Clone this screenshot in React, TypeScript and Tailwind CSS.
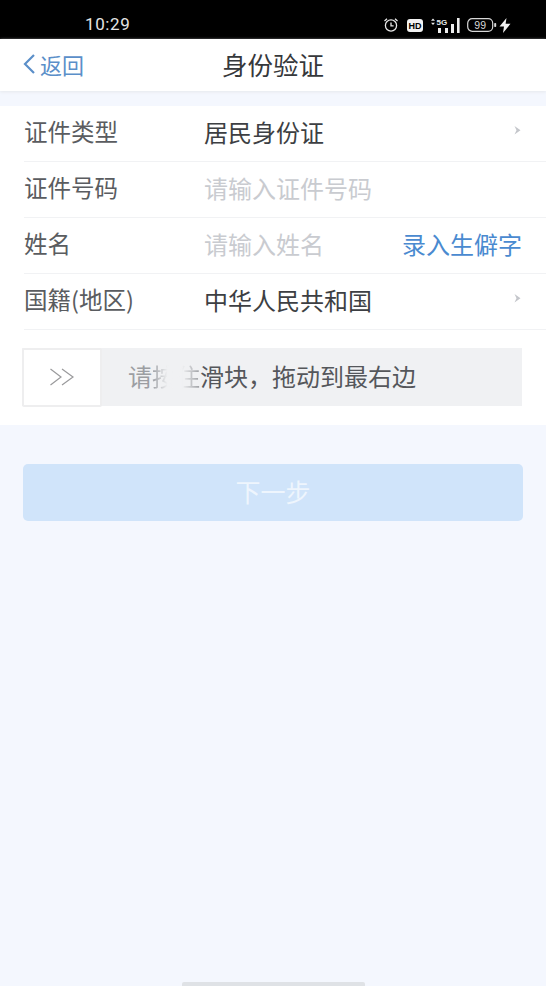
import React from 'react';

const cjk = { fontFamily: '"Noto Sans CJK SC", "Liberation Sans", sans-serif' };

const Chevron: React.FC = () => (
  <svg width="9" height="11" viewBox="0 0 9 11" className="mb-1">
    <path d="M1.5 1 L7.5 5.2 L1.5 9.5 L3.5 5.2 Z" fill="#c4c6cb" />
  </svg>
);

const StatusIcons: React.FC = () => (
  <div className="flex items-center">
    <svg width="16" height="16" viewBox="0 0 16 16" fill="none" stroke="#e8e8e8" strokeWidth="1.3">
      <circle cx="8" cy="8.5" r="5.6" />
      <path d="M8 5.6V8.9H10.6" />
      <path d="M1.5 4 L4 1.8 M14.5 4 L12 1.8" />
    </svg>
    <svg width="16" height="13" viewBox="0 0 16 13" className="ml-[8px]">
      <rect x="0" y="0" width="16" height="13" rx="3" fill="#f2f2f2" />
      <text x="8" y="10" textAnchor="middle" fontSize="9" fontWeight="700" fill="#000" fontFamily="Liberation Sans">HD</text>
    </svg>
    <svg width="30" height="17" viewBox="0 0 30 17" className="ml-[7px]">
      <path d="M3 1.5 L5 3.7 H1 Z M3 8 L5 5.8 H1 Z" fill="#e8e8e8" />
      <text x="6.5" y="7.5" fontSize="8" fontWeight="700" fill="#e8e8e8" fontFamily="Liberation Sans">5G</text>
      <rect x="8" y="11" width="3" height="5" fill="#eee" />
      <rect x="15" y="11" width="3" height="5" fill="#eee" />
      <rect x="21" y="7" width="3" height="9" fill="#eee" />
      <rect x="27" y="1" width="2.6" height="15" fill="#eee" />
    </svg>
    <svg width="30" height="14" viewBox="0 0 30 14" className="ml-[7px]">
      <rect x="0.7" y="0.7" width="25" height="12.6" rx="4.5" fill="none" stroke="#d8d8d8" strokeWidth="1.2" />
      <rect x="27.2" y="5" width="2" height="4" rx="0.8" fill="#d8d8d8" />
      <text x="13.2" y="10.6" textAnchor="middle" fontSize="10.5" fill="#d8d8d8" fontFamily="Liberation Sans">99</text>
    </svg>
    <svg width="12" height="15" viewBox="0 0 12 15" className="ml-[2px]">
      <path d="M7.5 0 L0.5 8.5 H5 L4 15 L11.5 5.8 H6.6 Z" fill="#f2f2f2" />
    </svg>
  </div>
);

const Row: React.FC<{ label: string; children: React.ReactNode }> = ({ label, children }) => (
  <div className="flex items-center h-[56px] border-b border-[#f1f2f4] pb-[3px]">
    <div className="w-[180px] text-[23.5px] text-[#5a5c60] leading-none">{label}</div>
    <div className="flex-1 flex items-center justify-between pr-[24px] leading-none">{children}</div>
  </div>
);

const App: React.FC = () => {
  return (
    <div className="w-[546px] h-[986px] relative overflow-hidden bg-[#f4f7fe]" style={cjk}>
      <div className="h-[39px] bg-black flex items-center justify-between pl-[85px] pr-[35px] pt-[11px]">
        <span className="text-[17px] text-[#e4e4e4] tracking-[0.6px]" style={{ fontFamily: 'Roboto, sans-serif' }}>
          10:29
        </span>
        <StatusIcons />
      </div>

      <div className="h-[52px] bg-white flex items-center relative shadow-[0_1px_3px_#e6e8ec]">
        <div className="flex items-center pl-[22px] text-[#5b8fc9] pb-[2px]">
          <svg width="14" height="22" viewBox="0 0 14 22" fill="none" stroke="#5b8fc9" strokeWidth="2.2">
            <path d="M12 2 L3 11 L12 20" />
          </svg>
          <span className="text-[22px] ml-[4px] leading-none">返回</span>
        </div>
        <div className="absolute inset-0 flex items-center justify-center text-[25.5px] text-[#36383b] pb-[3px] leading-none">
          身份验证
        </div>
      </div>

      <div className="mt-[15px] bg-white pl-[24px] h-[319px]">
        <Row label="证件类型">
          <span className="text-[24px] text-[#3d3f43]">居民身份证</span>
          <Chevron />
        </Row>
        <Row label="证件号码">
          <span className="text-[24px] text-[#c9cbd0]">请输入证件号码</span>
        </Row>
        <Row label="姓名">
          <span className="text-[24px] text-[#c9cbd0]">请输入姓名</span>
          <span className="text-[24px] text-[#4a8ad0]">录入生僻字</span>
        </Row>
        <Row label="国籍(地区)">
          <span className="text-[24px] text-[#3d3f43]">中华人民共和国</span>
          <Chevron />
        </Row>
        <div className="mt-[18px] ml-[-2px] mr-[24px] h-[58px] bg-[#f0f1f3] relative flex items-center">
          <div className="w-[80px] h-[59px] bg-white border-2 border-[#eeeeef] rounded-[2px] flex items-center justify-center shrink-0">
            <svg width="26" height="20" viewBox="0 0 26 20" fill="none" stroke="#9a9a9c" strokeWidth="1.2">
              <path d="M1.5 2 L12 10 L1.5 18 M13 2 L24 10 L13 18" />
            </svg>
          </div>
          <span className="ml-[26px] text-[24px] text-[#55575b] leading-none pb-[3px]">
            <span className="text-[#9c9ea2]">请</span>
            <span className="text-transparent bg-clip-text bg-[linear-gradient(90deg,#a8aaae_10%,#f0f1f3_65%)]">按</span>
            <span className="text-transparent bg-clip-text bg-[linear-gradient(90deg,#f0f1f3_25%,#9c9ea2_100%)]">住</span>
            滑块，拖动到最右边
          </span>
        </div>
      </div>

      <div className="mt-[39px] mx-[23px] h-[57px] rounded-[5px] bg-[#d0e4fa] flex items-center justify-center text-[25px] text-[#eef5fd] leading-none pb-[2px]">
        下一步
      </div>

      <div className="absolute left-[182px] bottom-0 w-[183px] h-[4px] rounded-t-[2px] bg-[#dfe2e6]" />
    </div>
  );
};

export default App;
